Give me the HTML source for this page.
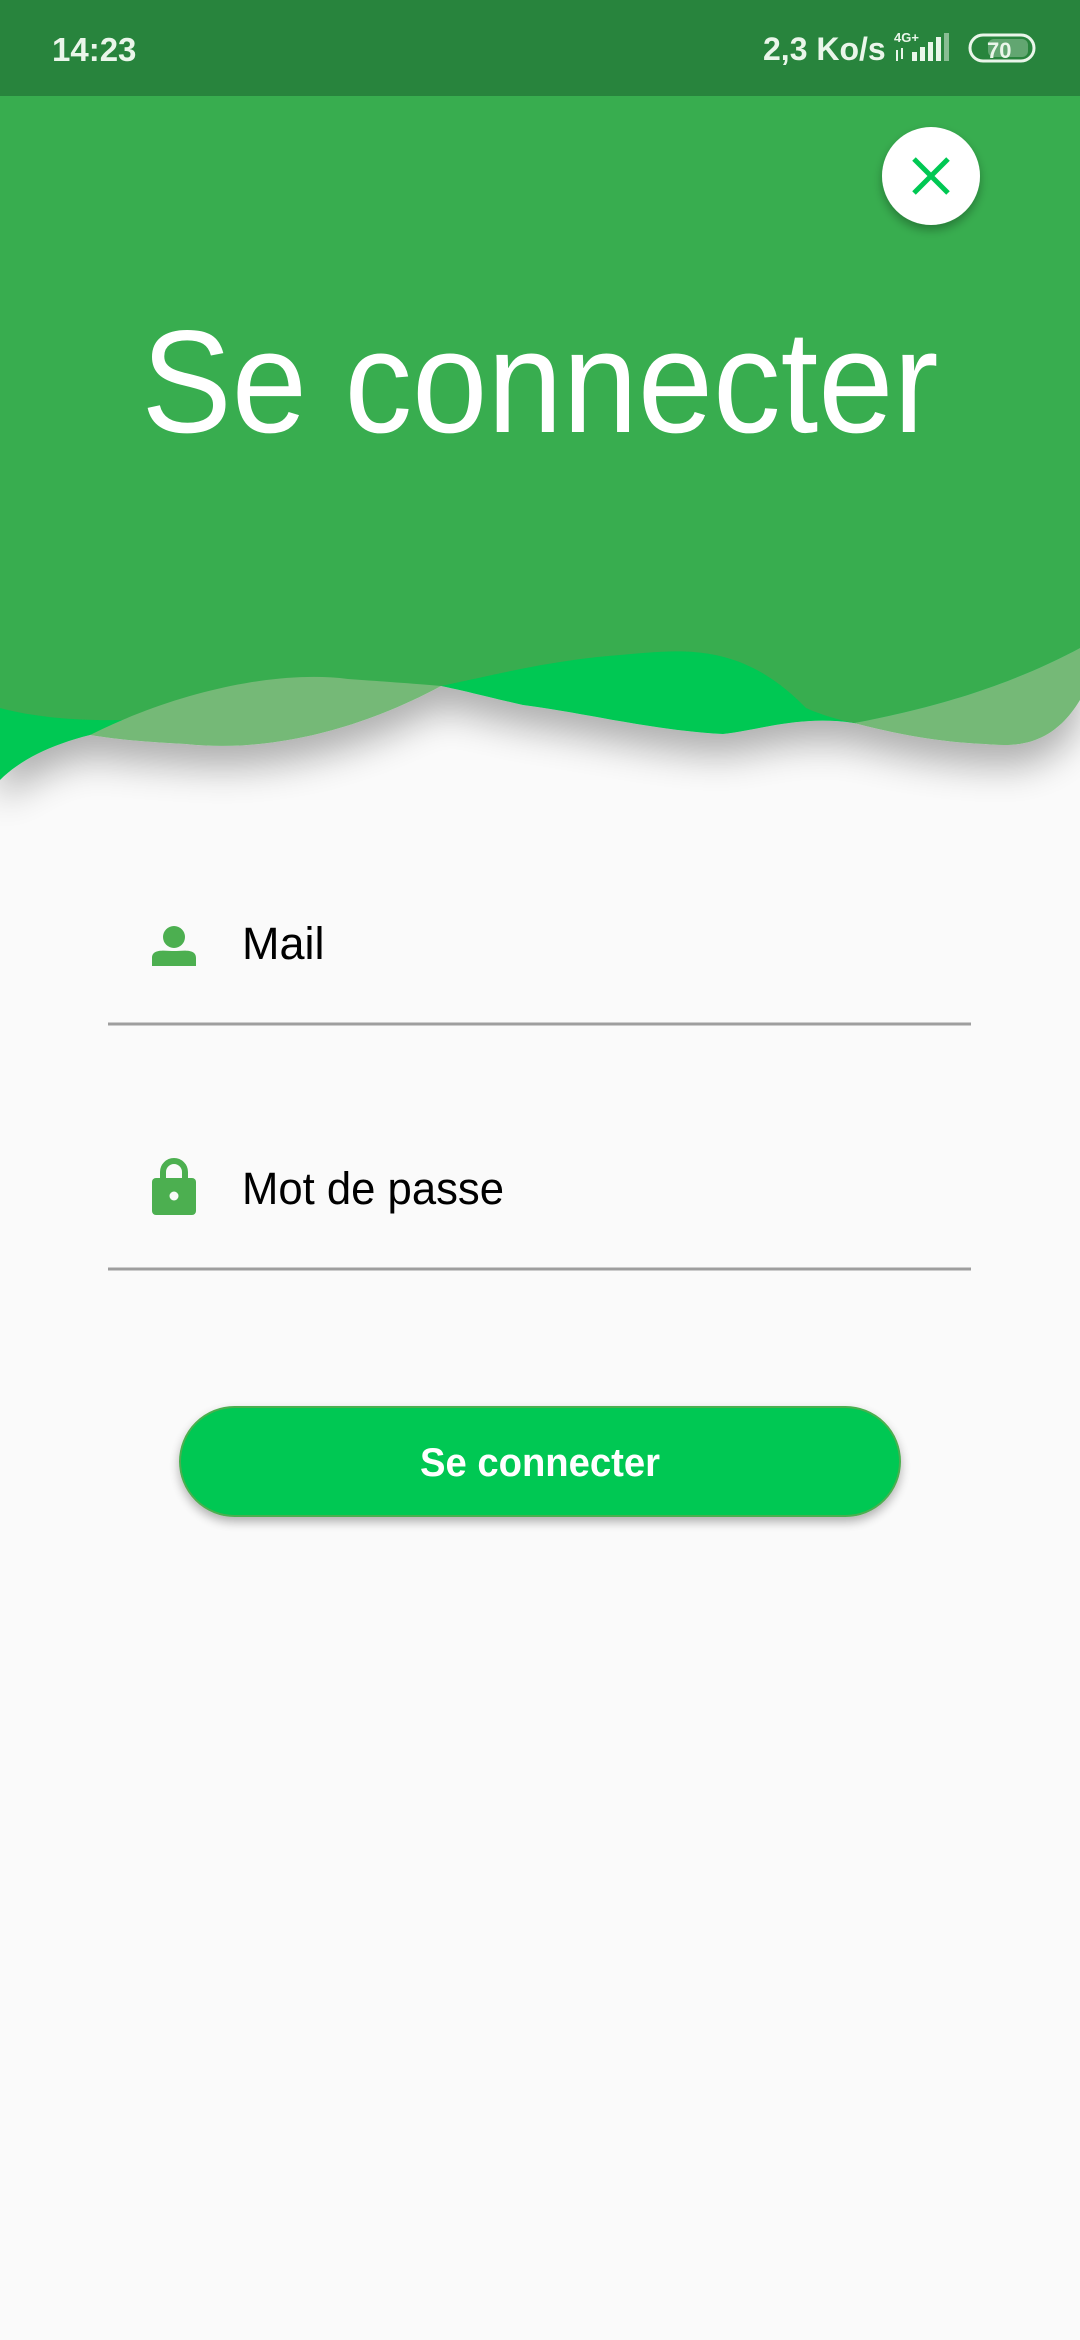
<!DOCTYPE html>
<html><head><meta charset="utf-8"><style>
html,body{margin:0;padding:0}
body{width:1080px;height:2340px;background:#fafafa;position:relative;overflow:hidden;font-family:"Liberation Sans",sans-serif}
</style></head><body>
<svg width="1080" height="2340" style="position:absolute;left:0;top:0">
<defs>
<filter id="sh" x="-10%" y="-10%" width="120%" height="140%"><feGaussianBlur in="SourceAlpha" stdDeviation="18"/><feOffset dy="22"/><feComponentTransfer><feFuncA type="linear" slope="0.3"/></feComponentTransfer><feMerge><feMergeNode/><feMergeNode in="SourceGraphic"/></feMerge></filter>
<filter id="bs" x="-10%" y="-30%" width="120%" height="180%"><feGaussianBlur in="SourceAlpha" stdDeviation="5"/><feOffset dy="5"/><feComponentTransfer><feFuncA type="linear" slope="0.3"/></feComponentTransfer><feMerge><feMergeNode/><feMergeNode in="SourceGraphic"/></feMerge></filter>
</defs>
<g filter="url(#sh)">
<path d="M0,0 H1080 V680 C1000,720 920,735 854,723 C800,715 760,730 723,734 C650,730 580,712 523,705 C500,700 470,692 441,686 C300,700 160,720 90,735 C50,745 20,760 0,780 Z" fill="#00c853"/>
<path d="M0,0 H1080 V648 C1020,680 950,705 854,723 C830,718 815,712 806,708 C740,640 680,650 620,655 C550,660 490,676 441,686 C300,700 120,740 0,708 Z" fill="#37ad4f"/>
<path d="M90,735 C180,690 280,670 348,679 C390,682 420,684 441,686 C350,735 260,752 186,744 C150,742 120,740 90,735 Z" fill="#74b977"/>
<path d="M854,723 C950,705 1020,680 1080,648 V700 C1050,750 1010,746 985,744 C940,742 900,735 854,723 Z" fill="#74b977"/>
</g>
<rect x="0" y="0" width="1080" height="96" fill="#28843d"/>
<text x="52" y="61" font-size="33" font-weight="bold" fill="#eaf6ea">14:23</text>
<text x="763" y="60" font-size="32" font-weight="bold" fill="#eaf6ea">2,3 Ko/s</text>
<text x="894" y="42" font-size="13" font-weight="bold" fill="#eaf6ea">4G+</text>
<g fill="#eaf6ea"><rect x="912" y="52" width="5" height="9"/><rect x="920" y="47" width="5" height="14"/><rect x="928" y="42" width="5" height="19"/><rect x="936" y="37" width="5" height="24"/><rect x="944" y="33" width="5" height="28" opacity="0.5"/><rect x="896" y="50" width="2" height="11"/><rect x="901" y="48" width="2" height="11"/></g>
<rect x="970" y="35" width="64" height="26" rx="13" fill="none" stroke="#eaf6ea" stroke-width="3"/>
<rect x="988" y="39" width="40" height="18" rx="6" fill="#eaf6ea" opacity="0.3"/>
<text x="987" y="58" font-size="22" font-weight="bold" fill="#eaf6ea">70</text>
<circle cx="931" cy="176" r="49" fill="#fff" filter="url(#bs)"/>
<path d="M914,159 L948,193 M948,159 L914,193" stroke="#00c853" stroke-width="5"/>
<text x="540" y="432" font-size="146" fill="#fff" text-anchor="middle" textLength="797" lengthAdjust="spacingAndGlyphs">Se connecter</text>
<circle cx="174" cy="937" r="11" fill="#4caf50"/>
<path d="M152,966 V958 C152,948 166,951 174,951 C182,951 196,948 196,958 V966 Z" fill="#4caf50"/>
<text x="242" y="959" font-size="45" fill="#000">Mail</text>
<line x1="108" y1="1024" x2="971" y2="1024" stroke="#9e9e9e" stroke-width="3"/>
<path d="M163,1182 V1172 A11,11 0 0 1 185,1172 V1182" fill="none" stroke="#4caf50" stroke-width="6"/>
<rect x="152" y="1178" width="44" height="37" rx="4" fill="#4caf50"/>
<circle cx="174" cy="1196" r="4.5" fill="#fafafa"/>
<text x="242" y="1204" font-size="45" fill="#000" textLength="262" lengthAdjust="spacingAndGlyphs">Mot de passe</text>
<line x1="108" y1="1269" x2="971" y2="1269" stroke="#9e9e9e" stroke-width="3"/>
<rect x="180" y="1407" width="720" height="109" rx="54.5" fill="#00c853" stroke="#4caf50" stroke-width="2" filter="url(#bs)"/>
<text x="540" y="1476" font-size="40" font-weight="bold" fill="#fff" text-anchor="middle" textLength="240" lengthAdjust="spacingAndGlyphs">Se connecter</text>
</svg>
</body></html>
